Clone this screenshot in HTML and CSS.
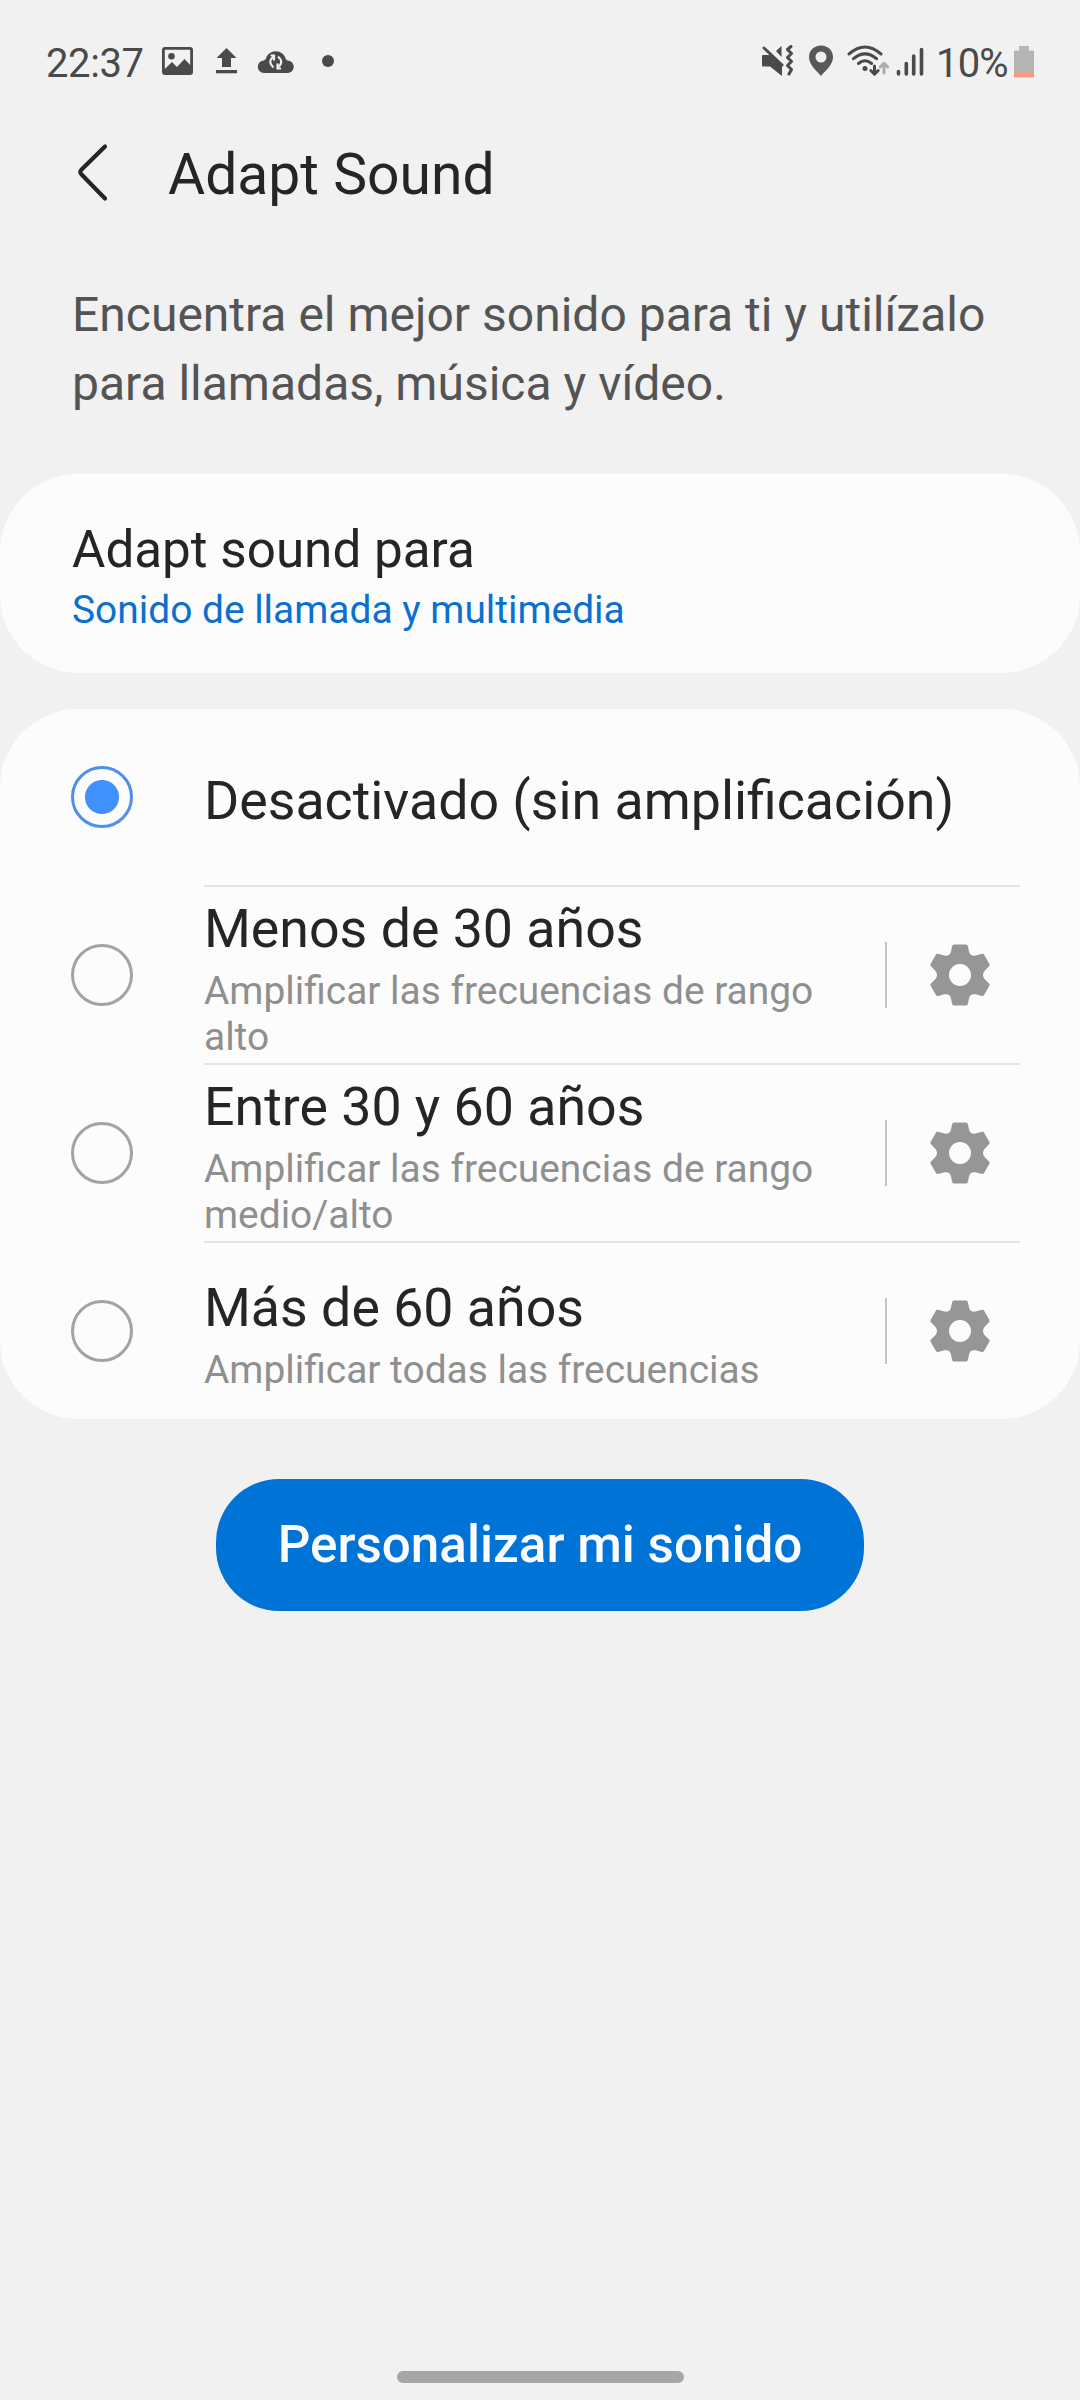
FILE: index.html
```html
<!DOCTYPE html>
<html lang="es">
<head>
<meta charset="utf-8">
<title>Adapt Sound</title>
<link rel="stylesheet" href="styles.css">
</head>
<body>
<svg class="defs" width="0" height="0">
  <symbol id="gear" viewBox="0 0 60 62">
    <path fill-rule="evenodd" d="M24 .5H36Q37.500 .5 37.800 2L39.300 8.500Q40.500 12.300 45.500 11.500L52 9.800Q53.300 9.400 54 10.500L59.400 20Q60 21.300 59 22.300L54.500 27Q51.500 31 54.500 35L59 39.500Q60 40.600 59.400 41.800L54 51Q53.300 52.200 52 51.900L45.500 50.300Q40.500 49.500 39.300 53.500L37.800 60Q37.500 61.500 36 61.500H24Q22.500 61.500 22.200 60L20.700 53.500Q19.500 49.500 14.500 50.300L8 51.900Q6.700 52.200 6 51L.6 41.800Q0 40.600 1 39.500L5.500 35Q8.500 31 5.500 27L1 22.300Q0 21.300 .6 20L6 10.500Q6.700 9.400 8 9.800L14.500 11.500Q19.500 12.300 20.700 8.500L22.200 2Q22.500 .5 24 .5ZM30 20A11 11 0 1 0 30 42A11 11 0 1 0 30 20Z"/>
  </symbol>
</svg>
<div class="screen">
  <header class="status">
    <span class="time">22:37</span>
    <svg class="notifications" width="180" height="40" viewBox="0 0 180 40">
      <path fill-rule="evenodd" d="M3 0H28Q31 0 31 3V25Q31 28 28 28H3Q0 28 0 25V3Q0 0 3 0ZM2.800 2.800V22L10 15L15 20L22.500 12L28.200 18V2.800ZM9.500 6A3.300 3.300 0 1 1 9.500 12.600A3.300 3.300 0 1 1 9.500 6Z"/>
      <path d="M64.500 1L74.500 11H69V20H60V11H54.500ZM54 23H75V26.300H54Z"/>
      <path d="M102 26A6.200 6.200 0 0 1 102 13.500Q102.500 12.500 103.500 12.500A10.500 10.500 0 0 1 124 12.500Q125 13 125.500 13.500A6.200 6.200 0 0 1 125.500 26Z"/>
      <g class="sync"><path d="M111.500 9.500Q105 15 111.500 20.500M116 9.500Q122.500 15 116 20.500"/><path d="M108.500 8.500H112V13.500M119 21.500H115.500V16.500"/></g>
      <circle cx="166" cy="14" r="6"/>
    </svg>
    <svg class="system" width="162" height="40" viewBox="0 0 162 40">
      <path d="M0 11Q0 10 1 10H8L20 21V31L8 21.500H1Q0 21.500 0 20.500ZM14 6L19.500 1V12Z"/>
      <g class="stroke"><path d="M2 3L20 20"/><path d="M29 1.500L25.500 4.500L29.500 8.500L25.500 12.500L29.500 16.500L25.500 20.500L29.500 24.500L27 29"/></g>
      <path class="pin" fill-rule="evenodd" d="M59 .5C66 .5 71 5.500 71 12C71 20 63 26 59 31C55 26 47 20 47 12C47 5.500 52 .5 59 .5ZM59 6.500A5.500 5.500 0 1 0 59 17.500A5.500 5.500 0 1 0 59 6.500Z"/>
      <g class="stroke wifi"><path d="M87 9Q103-5 119 9M91.500 13.700Q103 4 114.500 13.700M96.500 18.500Q103 13 109.500 18.500"/><path d="M112.500 21V29M108.800 25.500L112.500 29.300L116.200 25.500"/><path class="faint" d="M122 28V19M118.300 22L122 18.300L125.700 22"/></g>
      <circle cx="103" cy="23.500" r="2.500"/>
      <path class="bars" d="M136.500 26.500V29M144.300 18.500V29M151.700 11V29M159.500 4.500V29"/>
    </svg>
    <span class="percent">10%</span>
    <svg class="battery" width="20" height="32" viewBox="0 0 20 32">
      <path class="shell" d="M5 0H15V4.500H19Q20 4.500 20 5.500V27H0V5.500Q0 4.500 1 4.500H5Z"/>
      <path class="charge" d="M0 26.500H20V30.300Q20 31.500 19 31.500H1Q0 31.500 0 30.300Z"/>
    </svg>
  </header>

  <div class="titlebar">
    <svg class="back" width="32" height="60" viewBox="0 0 32 60"><path d="M28 4.500L4.600 27.500Q2 30 4.600 32.500L28 56.500"/></svg>
    <h1>Adapt Sound</h1>
  </div>

  <p class="intro">Encuentra el mejor sonido para ti y utilízalo para llamadas, música y vídeo.</p>

  <section class="card target">
    <h2>Adapt sound para</h2>
    <p>Sonido de llamada y multimedia</p>
  </section>

  <section class="card options">
    <div class="option">
      <span class="radio checked"></span>
      <div class="body"><div class="text"><h2>Desactivado (sin amplificación)</h2></div></div>
    </div>
    <div class="option">
      <span class="radio"></span>
      <div class="body"><div class="text"><h2>Menos de 30 años</h2><p>Amplificar las frecuencias de rango alto</p></div>
        <div class="action"><svg width="60" height="62"><use href="#gear"/></svg></div></div>
    </div>
    <div class="option">
      <span class="radio"></span>
      <div class="body"><div class="text"><h2>Entre 30 y 60 años</h2><p>Amplificar las frecuencias de rango medio/alto</p></div>
        <div class="action"><svg width="60" height="62"><use href="#gear"/></svg></div></div>
    </div>
    <div class="option">
      <span class="radio"></span>
      <div class="body"><div class="text"><h2>Más de 60 años</h2><p>Amplificar todas las frecuencias</p></div>
        <div class="action"><svg width="60" height="62"><use href="#gear"/></svg></div></div>
    </div>
  </section>

  <button class="customize">Personalizar mi sonido</button>
  <div class="home"></div>
</div>
</body>
</html>
```
FILE: styles.css
```css
* { box-sizing: border-box; margin: 0; padding: 0; }
body { background: #f1f1f1; font-family: Roboto, sans-serif; color: #252525; }
h1, h2 { font-weight: 400; }
svg { display: block; flex: none; }
.defs { position: absolute; }
.screen { width: 1080px; height: 2400px; display: flex; flex-direction: column; overflow: hidden; }

.status { height: 120px; padding: 6px 46px 0 46px; display: flex; align-items: center; font-size: 40px; color: #4a4a4a; fill: #4a4a4a; }
.time { width: 116px; letter-spacing: -0.4px; }
.notifications { margin-top: 8px; }
.system { margin-left: auto; margin-top: 4px; }
.percent { width: 73px; margin-left: 12px; letter-spacing: -0.8px; }
.battery { margin-left: 5px; margin-top: -3px; }
.sync { fill: none; stroke: #f1f1f1; stroke-width: 2.2; }
.stroke { fill: none; stroke: #4a4a4a; stroke-width: 3; stroke-linecap: round; stroke-linejoin: round; }
.pin { fill: #595959; }
.faint { stroke: #adadad; }
.bars { fill: none; stroke: #4a4a4a; stroke-width: 3.6; stroke-linecap: round; }
.shell { fill: #b4b4b4; }
.charge { fill: #fa9980; }

.titlebar { height: 110px; padding-left: 77px; display: flex; align-items: center; }
.titlebar h1 { margin-left: 59px; font-size: 57px; line-height: 68px; }
.back { margin-bottom: 6px; }
.back path { fill: none; stroke: #252525; stroke-width: 4.2; stroke-linecap: round; stroke-linejoin: round; }

.intro { height: 244px; padding: 50px 72px 0; font-size: 48px; line-height: 69px; color: #545454; }

.card { background: #fcfcfc; border-radius: 78px; }
.target { height: 199px; padding: 46px 72px 0; }
.target h2 { font-size: 51.2px; line-height: 60px; }
.target p { font-size: 38.9px; line-height: 46px; color: #0a70d0; margin-top: 7px; }

.options { height: 710px; margin-top: 36px; }
.option { height: 178px; padding: 0 60px 0 71px; display: flex; }
.radio { flex: none; width: 62px; height: 62px; margin: 57px 71px 0 0; border: 3px solid #a3a3a3; border-radius: 50%; }
.radio.checked { border-color: #4c90ea; background: radial-gradient(circle, #4090ff 16.500px, transparent 17.500px); }
.body { flex: 1; display: flex; align-items: center; border-bottom: 2px solid #e4e4e4; }
.option:last-child .body { border-bottom-color: transparent; }
.text { width: 681px; padding-top: 6px; }
.option .text h2 { font-size: 53.7px; line-height: 63px; white-space: nowrap; }
.option .text p { width: 640px; margin-top: 8px; font-size: 38.9px; line-height: 46px; color: #8f8f8f; }
.action { height: 66px; flex: 1; border-left: 2px solid #c4c4c4; padding-left: 43px; display: flex; align-items: center; fill: #969696; }

.customize { align-self: center; width: 648px; height: 132px; margin-top: 60px; border: 0; border-radius: 63px; background: #0073d7; color: #fcfcfc; font: 500 51.2px/60px Roboto, sans-serif; }
.home { align-self: center; width: 287px; height: 12px; margin-top: auto; margin-bottom: 17px; border-radius: 6px; background: #a6a6a6; }
```
